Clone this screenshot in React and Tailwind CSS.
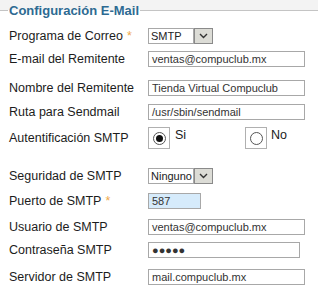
import React from "react";

const font = { fontFamily: '"Liberation Sans", Arial, sans-serif' };

function Star() {
  return <span className="text-[#f0a848] ml-[4px]">*</span>;
}

function Row({ label, star, h = "h-[20px]", mt, children }) {
  return (
    <div className={`flex items-center ${h} ${mt}`}>
      <div className="w-[148px] pl-[9px] text-[12.5px] text-[#1c1c1c] whitespace-nowrap">
        {label}
        {star && <Star />}
      </div>
      <div className="flex items-center">{children}</div>
    </div>
  );
}

function TextBox({ value, w = "w-[157px]", bg = "bg-white" }) {
  return (
    <div
      className={`${w} h-[16px] ${bg} border border-[#a8a8a8] px-[3px] text-[11px] leading-[14px] text-[#333] whitespace-nowrap overflow-hidden`}
    >
      {value}
    </div>
  );
}

function Select({ value, w }) {
  return (
    <div className="flex items-center h-[16px]">
      <div
        className={`${w} h-[16px] bg-white border border-[#a8a8a8] px-[2px] text-[11px] leading-[14px] text-[#222]`}
      >
        {value}
      </div>
      <div className="w-[19px] h-[16px] bg-[#dcdcd6] border border-[#8a8a8a] flex items-center justify-center">
        <svg width="9" height="6" viewBox="0 0 9 6">
          <path d="M1 1 L4.5 4.5 L8 1" fill="none" stroke="#333" strokeWidth="1.4" />
        </svg>
      </div>
    </div>
  );
}

function Radio({ checked }) {
  return (
    <div className="w-[22px] h-[22px] border border-[#b0b0b0] bg-white flex items-center justify-center">
      <div className="w-[13px] h-[13px] rounded-full border border-[#555] bg-white flex items-center justify-center">
        {checked && <div className="w-[7px] h-[7px] rounded-full bg-[#111]" />}
      </div>
    </div>
  );
}

export default function App() {
  return (
    <div className="w-[318px] h-[299px] bg-[#f3f3f3] overflow-hidden" style={font}>
      <fieldset className="m-0 p-0 border-0 border-t border-[#c4c4c4] bg-white min-h-[300px] mt-[2px]">
        <legend className="ml-[8px] px-[1px] text-[13px] font-bold text-[#2d6a92] leading-[17px]">
          Configuración E-Mail
        </legend>
        <div className="pt-[7px]">
          <Row label="Programa de Correo" star>
            <Select value="SMTP" w="w-[46px]" />
          </Row>
          <Row label="E-mail del Remitente" mt="mt-[3px]">
            <TextBox value="ventas@compuclub.mx" />
          </Row>
          <Row label="Nombre del Remitente" mt="mt-[9px]">
            <TextBox value="Tienda Virtual Compuclub" />
          </Row>
          <Row label="Ruta para Sendmail" mt="mt-[4px]">
            <TextBox value="/usr/sbin/sendmail" />
          </Row>
          <Row label="Autentificación SMTP" mt="mt-[6px]">
            <div className="flex items-center w-[97px]">
              <Radio checked />
              <span className="ml-[5px] text-[12.5px] text-[#1c1c1c] -mt-[6px]">Si</span>
            </div>
            <div className="flex items-center">
              <Radio />
              <span className="ml-[4px] text-[12.5px] text-[#1c1c1c] -mt-[6px]">No</span>
            </div>
          </Row>
          <Row label="Seguridad de SMTP" mt="mt-[18px]">
            <Select value="Ninguno" w="w-[46px]" />
          </Row>
          <Row label="Puerto de SMTP" star mt="mt-[5px]">
            <TextBox value="587" w="w-[53px]" bg="bg-[#d6ebfb]" />
          </Row>
          <Row label="Usuario de SMTP" mt="mt-[6px]">
            <TextBox value="ventas@compuclub.mx" />
          </Row>
          <Row label="Contraseña SMTP" mt="mt-[3px]">
            <TextBox value="●●●●●" w="w-[152px]" />
          </Row>
          <Row label="Servidor de SMTP" mt="mt-[7px]">
            <TextBox value="mail.compuclub.mx" />
          </Row>
        </div>
      </fieldset>
    </div>
  );
}
